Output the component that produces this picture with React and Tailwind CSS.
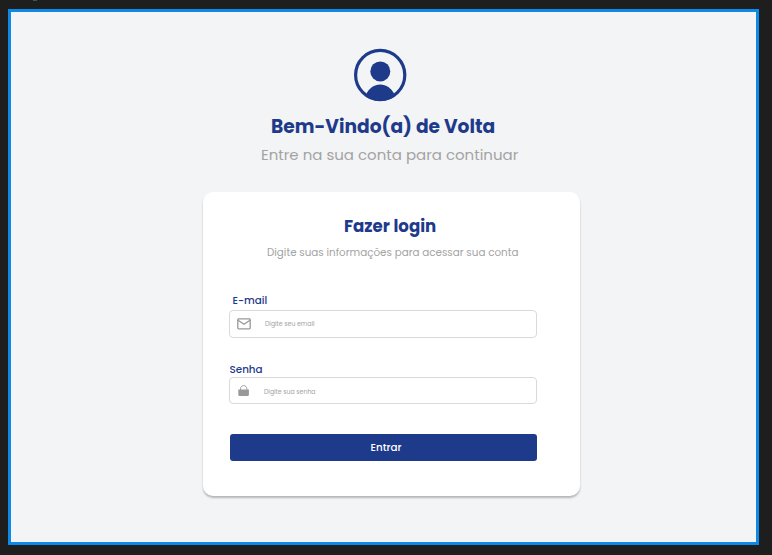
import React from "react";

function Avatar() {
  return (
    <svg viewBox="0 0 54 54" className="ml-[342px] block h-[54px] w-[54px]" fill="none">
      <defs>
        <clipPath id="ring">
          <circle cx="27.2" cy="27" r="26" />
        </clipPath>
      </defs>
      <circle cx="27.2" cy="27" r="24.6" stroke="#1e3a8a" strokeWidth="3.2" />
      <circle cx="27.3" cy="23.4" r="10" fill="#1e3a8a" />
      <path clipPath="url(#ring)" d="M13 46.5C16.5 40 21 36.6 27.2 36.6S38 40 41.5 46.5L38 54H16Z" fill="#1e3a8a" />
    </svg>
  );
}

function Mail() {
  return (
    <svg viewBox="0 0 14 12" className="ml-[7px] h-[12px] w-[14px] shrink-0" fill="none" stroke="#999" strokeWidth="1.3">
      <rect x="0.8" y="0.9" width="12.4" height="10" rx="0.8" />
      <path d="M1 2.2L7 6.3L13 2.2" />
    </svg>
  );
}

function Lock() {
  return (
    <svg viewBox="0 0 12 12" className="ml-[8px] h-[12px] w-[12px] shrink-0" fill="none">
      <path d="M2.5 5.5V4C2.5 2 3.8.6 5.7.6S8.9 2 8.9 4v1.5" stroke="#999" strokeWidth="0.9" />
      <path d="M.3 4.6h10.6v4.8c0 1.1-.6 1.7-1.6 1.7H1.9c-1 0-1.6-.6-1.6-1.7Z" fill="#999" />
    </svg>
  );
}

export default function App() {
  return (
    <div className="h-[555px] w-[772px] overflow-hidden bg-[#1e1e1e] font-[Poppins,sans-serif]">
      <div className="h-[9px] pl-[33px]">
        <div className="h-px w-[4px] bg-[#355564]" />
      </div>
      <main className="ml-[8px] h-[536px] w-[751px] border-[3px] border-[#0d8ae8] bg-[#f3f4f6] pt-[36px] text-[#1e3a8a]">
        <Avatar />
        <h1 className="mt-[12px] ml-[260px] h-[26px] text-[18.65px] leading-[26px] font-bold whitespace-nowrap">Bem-Vindo(a) de Volta</h1>
        <p className="mt-[4px] ml-[250px] h-[22px] text-[15px] leading-[22px] whitespace-nowrap text-[#a3a3a3]">Entre na sua conta para continuar</p>
        <section className="mt-[26px] ml-[192px] h-[304px] w-[377px] rounded-[10px] bg-white pt-[24px] pl-[26px] shadow-[0_2px_2px_rgba(0,0,0,0.25)]">
          <h2 className="ml-[115px] h-[22px] text-[16.6px] leading-[22px] font-bold whitespace-nowrap">Fazer login</h2>
          <p className="mt-[6px] ml-[38px] h-[18px] text-[10.35px] leading-[18px] whitespace-nowrap text-[#a3a3a3]">Digite suas informações para acessar sua conta</p>
          <form>
            <label className="mt-[32px] ml-[3.5px] block h-[14px] text-[10.35px] leading-[14px] font-medium whitespace-nowrap">E-mail</label>
            <div className="mt-[2px] flex h-[28px] w-[308px] items-center rounded-[4px] border border-[#d9d9d9]">
              <Mail />
              <span className="ml-[14px] text-[6.2px] whitespace-nowrap text-[#a3a3a3]">Digite seu email</span>
            </div>
            <label className="mt-[25px] ml-[0.5px] block h-[14px] text-[10.35px] leading-[14px] font-medium whitespace-nowrap">Senha</label>
            <div className="flex h-[27px] w-[308px] items-center rounded-[4px] border border-[#d9d9d9]">
              <Lock />
              <span className="ml-[14px] pt-[2px] text-[6.2px] whitespace-nowrap text-[#a3a3a3]">Digite sua senha</span>
            </div>
            <button type="button" className="mt-[30px] ml-[0.5px] block h-[27px] w-[307.5px] rounded-[3px] bg-[#1e3a8a] pl-[141px] text-left text-[10.35px] font-medium text-white">Entrar</button>
          </form>
        </section>
      </main>
    </div>
  );
}
